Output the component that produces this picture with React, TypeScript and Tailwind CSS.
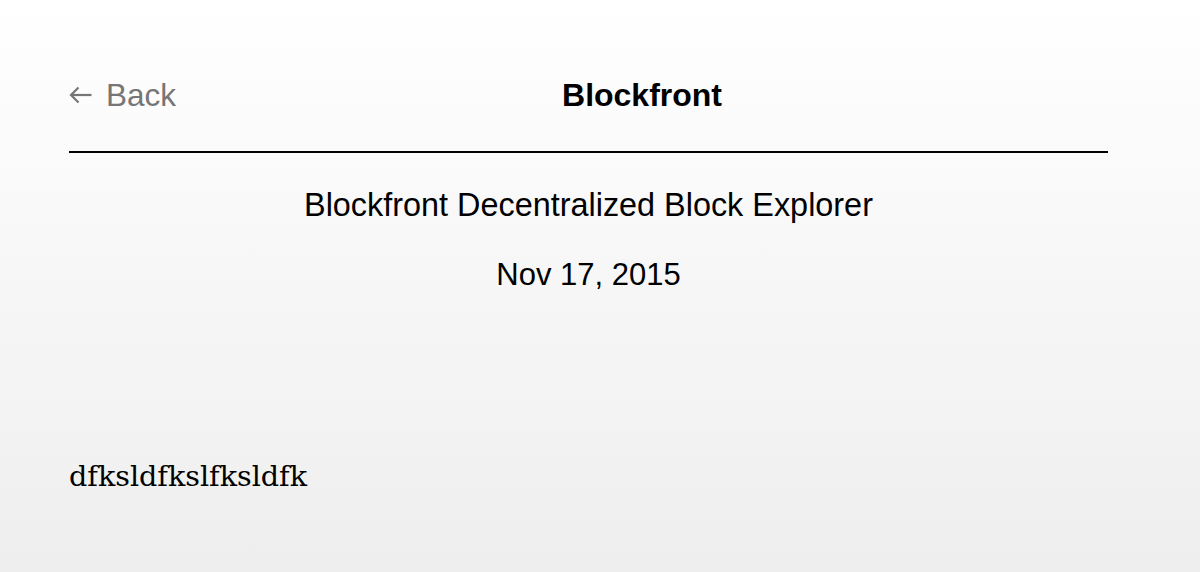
import React from 'react';

const BackArrow: React.FC = () => (
  <svg width="23" height="18" viewBox="0 0 23 18" fill="none" stroke="currentColor" strokeWidth="2.2" strokeLinecap="butt">
    <path d="M22.5 9H2" />
    <path d="M9.5 1.5L2 9l7.5 7.5" />
  </svg>
);

const App: React.FC = () => {
  return (
    <div className="min-h-[572px] w-full bg-gradient-to-b from-white to-[#eeeeee] font-['Liberation_Sans',Arial,sans-serif] text-black">
      <div className="ml-[69px] w-[1039px] pt-[79px]">
        <header className="flex h-[32px] items-center">
          <a href="#" className="flex items-center gap-[14px] text-[31.5px] leading-[32px] text-[#767676]">
            <BackArrow />
            <span>Back</span>
          </a>
          <h1 className="flex-1 text-center text-[32px] font-bold leading-[32px]">Blockfront</h1>
        </header>
        <div className="mt-[40px] h-[2px] bg-black" />
        <div className="mt-[36px] flex flex-col items-center gap-[38px] leading-[32px]">
          <p className="text-[32.4px]">Blockfront Decentralized Block Explorer</p>
          <p className="text-[31px]">Nov 17, 2015</p>
        </div>
        <div className="mt-[171px] font-['DejaVu_Serif',Georgia,serif] text-[28.6px] leading-[29px] text-black">
          dfksldfkslfksldfk
        </div>
      </div>
    </div>
  );
};

export default App;
